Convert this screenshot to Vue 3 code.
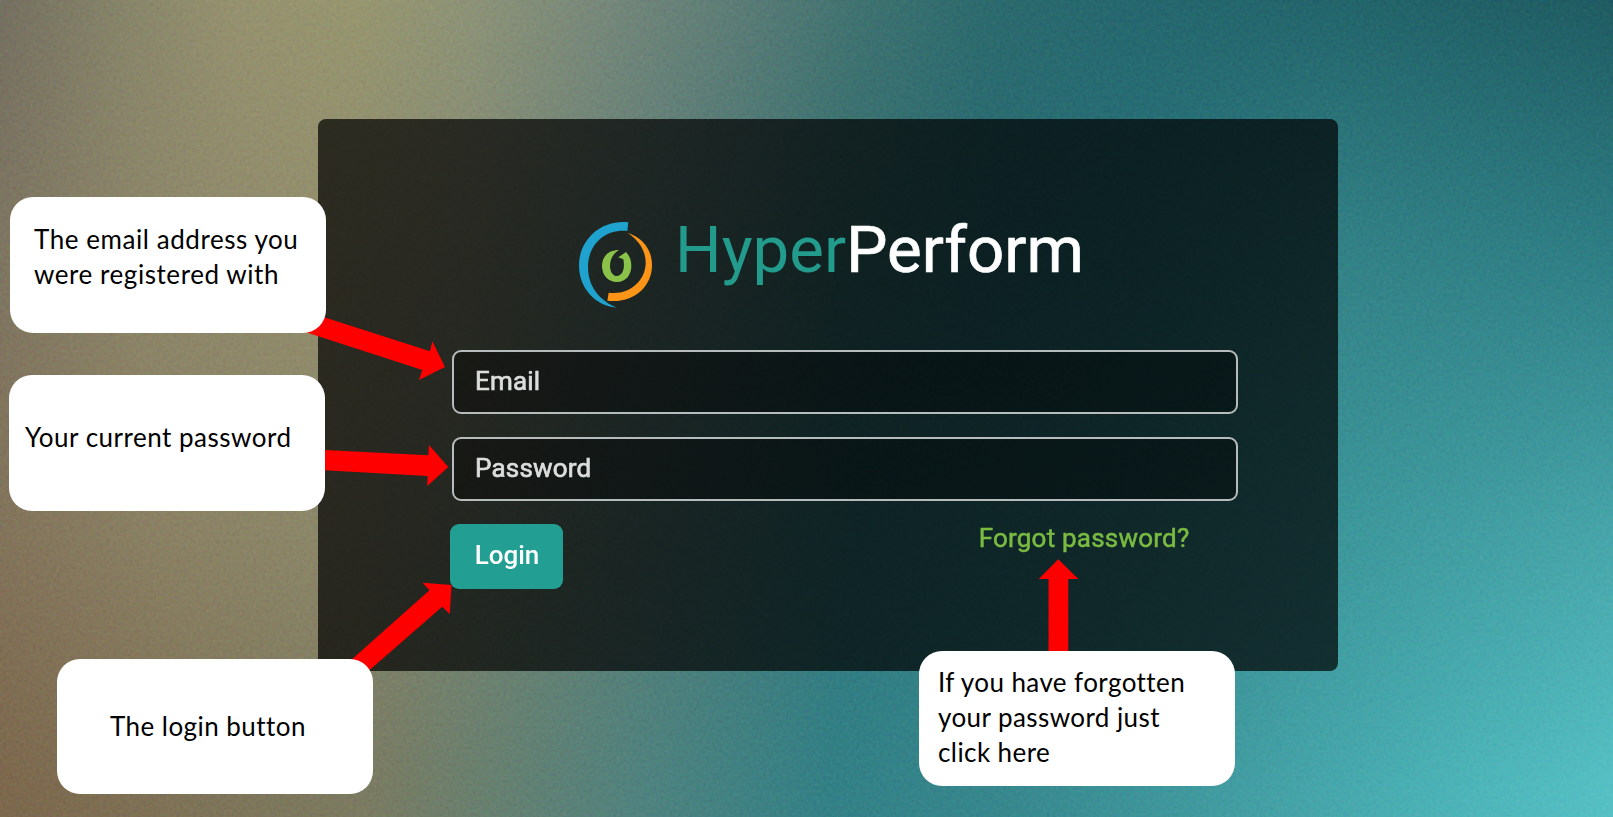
<script setup>
const callouts = [
  { id: 'email', lines: ['The email address you', 'were registered with'] },
  { id: 'password', lines: ['Your current password'] },
  { id: 'login', lines: ['The login button'] },
  { id: 'forgot', lines: ['If you have forgotten', 'your password just', 'click here'] },
]
</script>

<template>
  <main class="page">
    <div class="backdrop">
      <div class="band band-a"></div>
      <div class="band band-b"></div>
      <div class="band band-c"></div>
      <div class="band band-d"></div>
      <svg class="grain" width="100%" height="100%">
        <filter id="grain" x="0" y="0" width="100%" height="100%" color-interpolation-filters="sRGB">
          <feTurbulence type="fractalNoise" baseFrequency="0.3" numOctaves="2" seed="4" />
          <feColorMatrix values="1 0 0 0 0.03  0 1 0 0 0.03  0 0 1 0 0.03  0 0 0 0 1" />
        </filter>
        <rect width="100%" height="100%" filter="url(#grain)" />
      </svg>
    </div>

    <section class="card">
      <header class="brand">
        <svg class="mark" viewBox="0 0 270 315">
          <path fill="#1fa2cd" d="M175 37C90 28 27 92 27 166C27 234 75 288 140 293C92 272 54 233 54 170C54 105 105 56 172 63Z" />
          <path fill="#fb9417" d="M172 68C220 84 247 120 246 168C245 230 190 282 112 272L116 248C175 257 226 215 227 160C228 122 206 90 172 68Z" />
          <path fill="#8bc34a" d="M147 120C114 120 96 140 96 168C96 196 115 216 141 216C167 216 184 195 184 168C184 150 178 136 168 126L145 142L160 148C167 184 152 198 141 198C130 198 120 187 120 167C120 145 131 130 147 120Z" />
        </svg>
        <h1 class="name"><span class="hyper">Hyper</span><span class="perform">Perform</span></h1>
      </header>
      <form class="form" @submit.prevent>
        <div class="field">Email</div>
        <div class="field">Password</div>
        <div class="actions">
          <button class="login" type="submit">Login</button>
          <a class="forgot">Forgot password?</a>
        </div>
      </form>
    </section>

    <svg class="arrows" viewBox="0 0 1613 817" fill="#fe0000">
      <polygon points="300,309.5 430,351.3 432.3,341.3 445,367 419,380 422.3,370 296,329" />
      <polygon points="315,449.5 428.3,455.3 429,445 448.3,467 427.3,486 427.6,476 315,469.8" />
      <polygon points="341,669 429.5,590.3 422.6,582.7 451.5,585 449.8,614 442.2,606.7 357,681" />
      <polygon points="1048.5,660 1048.5,579 1038.7,579 1058.3,559.3 1078.3,579 1068.3,579 1068.3,660" />
    </svg>

    <aside v-for="c in callouts" :key="c.id" class="callout" :class="'c-' + c.id">
      <span v-for="(l, i) in c.lines" :key="i">{{ l }}</span>
    </aside>
  </main>
</template>

<style>
body { margin: 0; overflow: hidden; }
</style>

<style scoped>
.page {
  position: relative;
  box-sizing: border-box;
  width: 1613px;
  height: 817px;
  overflow: hidden;
  padding: 119px 0 0 317.5px;
  font-family: Roboto, "Liberation Sans", sans-serif;
}
.backdrop, .band, .grain { position: absolute; inset: 0; }
.band-a {
  background: linear-gradient(90deg, #746f60 0, #868469 120px, #95916f 230px, #97966f 360px, #8d9377 470px, #75877a 610px, #5b7c76 740px, #3f7270 860px, #2c6a6d 980px, #25676e 1120px, #22646a 1350px, #1f5b61 1613px);
}
.band-b {
  background: linear-gradient(90deg, #7e7561 0, #8c8569 140px, #928d6c 310px, #868a72 460px, #5f7e77 650px, #366f70 840px, #286c74 1000px, #28747b 1150px, #328186 1340px, #2d7d84 1613px);
  mask-image: linear-gradient(transparent 0, #000 250px);
}
.band-c {
  background: linear-gradient(90deg, #82735a 0, #8a8063 160px, #8b8668 310px, #748270 480px, #4f7b76 670px, #2f797e 860px, #33848a 1100px, #3c979b 1340px, #47a6aa 1613px);
  mask-image: linear-gradient(transparent 250px, #000 540px);
}
.band-d {
  background: linear-gradient(90deg, #7c674c 0, #7e7256 180px, #7b7a60 360px, #687f6e 480px, #4f827e 640px, #328086 830px, #36878d 1000px, #419ca1 1230px, #4bb2b6 1440px, #55c0c4 1613px);
  mask-image: linear-gradient(transparent 540px, #000 790px);
}
.grain { mix-blend-mode: soft-light; opacity: 0.2; }

.card {
  position: relative;
  box-sizing: border-box;
  width: 1020px;
  height: 552px;
  padding: 91px 100px 0 134px;
  border-radius: 8px;
  background: rgba(0, 0, 0, 0.7);
}
.brand { display: flex; align-items: flex-start; height: 140px; margin-left: 118.5px; }
.mark { width: 90px; height: 105px; flex: none; }
.name {
  margin: 0.5px 0 0 15px;
  font-size: 65.4px;
  line-height: 78px;
  font-weight: 400;
  white-space: nowrap;
}
.hyper { color: #229a8c; }
.perform { color: #fff; -webkit-text-stroke: 0.7px #fff; }
.form { display: flex; flex-direction: column; gap: 23px; }
.field {
  box-sizing: border-box;
  height: 64px;
  padding-left: 21.5px;
  border: 2px solid #b6bcbb;
  border-radius: 9px;
  background: rgba(0, 0, 0, 0.36);
  color: #dcdedd;
  font-size: 26px;
  line-height: 58px;
  letter-spacing: 0.2px;
  -webkit-text-stroke: 0.7px #dcdedd;
}
.actions { display: flex; justify-content: space-between; align-items: flex-start; margin: -0.5px 48px 0 -2px; }
.login {
  width: 113.5px;
  height: 65px;
  padding: 0 0 3px 1.5px;
  border: 0;
  border-radius: 9px;
  background: #229f92;
  color: #fff;
  font: 500 26px Roboto, sans-serif;
}
.forgot {
  color: #7abb41;
  font-size: 26px;
  line-height: 28px;
  letter-spacing: 0.22px;
  white-space: nowrap;
  -webkit-text-stroke: 0.5px #7abb41;
}

.arrows { position: absolute; left: 0; top: 0; width: 1613px; height: 817px; }
.callout {
  position: absolute;
  box-sizing: border-box;
  width: 315.5px;
  height: 135.5px;
  border-radius: 23px;
  background: #fff;
  color: #000;
  font: 26px/35px Lato, "Open Sans", sans-serif;
  font-variant-ligatures: none;
  letter-spacing: 0.56px;
  display: flex;
  flex-direction: column;
  align-items: flex-start;
  white-space: nowrap;
}
.c-email { left: 10.3px; top: 197.3px; padding: 24.7px 0 0 23.7px; }
.c-password { left: 9.3px; top: 375px; padding: 45px 0 0 15.7px; letter-spacing: 0.5px; }
.c-login { left: 57px; top: 658.5px; padding: 50.5px 0 0 53px; letter-spacing: 0.45px; }
.c-forgot { left: 919px; top: 650.5px; padding: 14.5px 0 0 19px; letter-spacing: 0.42px; }
</style>
